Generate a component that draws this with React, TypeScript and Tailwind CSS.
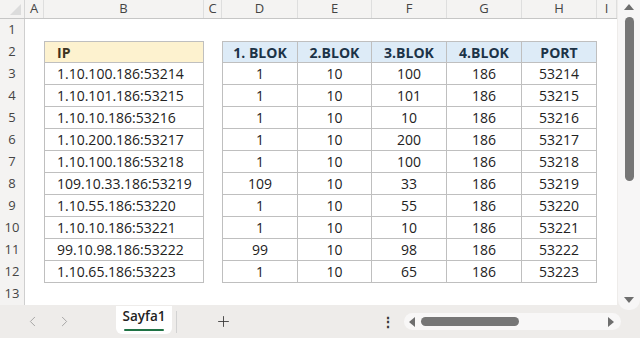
import React from 'react';
import { ChevronLeft, ChevronRight, Plus } from 'lucide-react';

const cols = [
  { key: 'A', w: 'w-[19px]' },
  { key: 'B', w: 'w-[160px]' },
  { key: 'C', w: 'w-[18px]' },
  { key: 'D', w: 'w-[76px]' },
  { key: 'E', w: 'w-[74px]' },
  { key: 'F', w: 'w-[75px]' },
  { key: 'G', w: 'w-[75px]' },
  { key: 'H', w: 'w-[75px]' },
  { key: 'I', w: 'w-[20px]' },
];

const rows: string[][] = [
  ['1.10.100.186:53214', '1', '10', '100', '186', '53214'],
  ['1.10.101.186:53215', '1', '10', '101', '186', '53215'],
  ['1.10.10.186:53216', '1', '10', '10', '186', '53216'],
  ['1.10.200.186:53217', '1', '10', '200', '186', '53217'],
  ['1.10.100.186:53218', '1', '10', '100', '186', '53218'],
  ['109.10.33.186:53219', '109', '10', '33', '186', '53219'],
  ['1.10.55.186:53220', '1', '10', '55', '186', '53220'],
  ['1.10.10.186:53221', '1', '10', '10', '186', '53221'],
  ['99.10.98.186:53222', '99', '10', '98', '186', '53222'],
  ['1.10.65.186:53223', '1', '10', '65', '186', '53223'],
];

const headers = ['1. BLOK', '2.BLOK', '3.BLOK', '4.BLOK', 'PORT'];
const numW = ['w-[76px]', 'w-[74px]', 'w-[75px]', 'w-[75px]', 'w-[75px]'];

const RowNum = ({ n }: { n: number }) => (
  <div className="w-[25px] h-full shrink-0 bg-[#f4f3f2] border-r border-[#cfcfcf] flex items-center justify-center text-[13px] text-[#444]">
    {n}
  </div>
);

const App: React.FC = () => {
  return (
    <div
      className="w-[640px] h-[338px] bg-[#eeecea] flex flex-col overflow-hidden text-[#222]"
      style={{ fontFamily: '"Open Sans", "Noto Sans", sans-serif' }}
    >
      <div className="flex h-[305px]">
        {/* sheet */}
        <div className="w-[617px] h-full bg-white flex flex-col">
          {/* column header */}
          <div className="flex h-[19px] bg-[#f4f3f2] border-b border-[#c6c6c6] shrink-0">
            <div className="w-[25px] h-full border-r border-[#d6d6d6] relative">
              <div className="absolute right-[3px] bottom-[3px] w-0 h-0 border-l-[11px] border-l-transparent border-b-[11px] border-b-[#dcdcdc]" />
            </div>
            {cols.map((c) => (
              <div
                key={c.key}
                className={`${c.w} h-full shrink-0 border-r border-[#dedede] flex items-center justify-center text-[13px] text-[#444]`}
              >
                {c.key}
              </div>
            ))}
          </div>

          {/* row 1 */}
          <div className="flex h-[22px] shrink-0">
            <RowNum n={1} />
          </div>

          {/* row 2 - headers */}
          <div className="flex h-[22px] shrink-0">
            <RowNum n={2} />
            <div className="w-[19px] shrink-0" />
            <div className="w-[160px] shrink-0 bg-[#fdf2cf] border border-[#bfbfbf] flex items-center pl-[12px] font-bold text-[14px] text-[#3d3421]">
              IP
            </div>
            <div className="w-[18px] shrink-0" />
            {headers.map((h, i) => (
              <div
                key={h}
                className={`${numW[i]} shrink-0 bg-[#ddebf7] border-t border-b border-r border-[#bfbfbf] ${i === 0 ? 'border-l' : ''} flex items-center justify-center font-bold text-[14px] text-[#1c3347]`}
              >
                {h}
              </div>
            ))}
          </div>

          {rows.map((r, idx) => (
            <div key={idx} className="flex h-[22px] shrink-0">
              <RowNum n={idx + 3} />
              <div className="w-[19px] shrink-0" />
              <div className="w-[160px] shrink-0 border-l border-r border-b border-[#bfbfbf] flex items-center pl-[12px] text-[14px]">
                {r[0]}
              </div>
              <div className="w-[18px] shrink-0" />
              {r.slice(1).map((v, i) => (
                <div
                  key={i}
                  className={`${numW[i]} shrink-0 border-b border-r border-[#bfbfbf] ${i === 0 ? 'border-l' : ''} flex items-center justify-center text-[14px]`}
                >
                  {v}
                </div>
              ))}
            </div>
          ))}

          <div className="flex h-[22px] shrink-0">
            <RowNum n={13} />
          </div>
        </div>

        {/* vertical scrollbar */}
        <div className="w-[22px] h-[310px] ml-[1px] bg-[#f7f6f6] rounded-b-[10px] relative">
          <div className="absolute left-[6px] top-[4px] w-0 h-0 border-l-[5px] border-l-transparent border-r-[5px] border-r-transparent border-b-[6px] border-b-[#6e6e6e]" />
          <div className="absolute left-[7px] top-[17px] w-[9px] h-[164px] rounded-full bg-[#767676]" />
          <div className="absolute left-[6px] top-[297px] w-0 h-0 border-l-[5px] border-l-transparent border-r-[5px] border-r-transparent border-t-[6px] border-t-[#6e6e6e]" />
        </div>
      </div>

      {/* tab bar */}
      <div className="flex items-center h-[33px] relative">
        <div className="w-[116px] flex items-center">
          <ChevronLeft size={17} strokeWidth={1.2} className="text-[#9a9a9a] ml-[24px]" />
          <ChevronRight size={17} strokeWidth={1.2} className="text-[#9a9a9a] ml-[15px]" />
        </div>
        <div className="w-[56px] h-[28px] -mt-[4px] bg-white rounded-b-[6px] flex flex-col items-center justify-center">
          <span className="text-[13.5px] font-semibold text-[#222] leading-none mt-[2px]">Sayfa1</span>
          <div className="w-[40px] h-[2px] bg-[#1f7244] mt-[5px] rounded-full" />
        </div>
        <div className="w-px h-[22px] bg-[#d2d2d2] ml-[4px]" />
        <Plus size={17} strokeWidth={1.2} className="text-[#333] ml-[38px]" />
        <div className="ml-[149px] text-[#333] text-[14px] font-bold leading-none">⋮</div>
        <div className="ml-[9px] w-[217px] h-[17px] bg-[#f8f7f7] rounded-full relative">
          <div className="absolute left-[5px] top-[4px] w-0 h-0 border-t-[5px] border-t-transparent border-b-[5px] border-b-transparent border-r-[6px] border-r-[#6e6e6e]" />
          <div className="absolute left-[17px] top-[4px] w-[98px] h-[9px] rounded-full bg-[#767676]" />
          <div className="absolute right-[7px] top-[4px] w-0 h-0 border-t-[5px] border-t-transparent border-b-[5px] border-b-transparent border-l-[6px] border-l-[#6e6e6e]" />
        </div>
      </div>
    </div>
  );
};

export default App;
